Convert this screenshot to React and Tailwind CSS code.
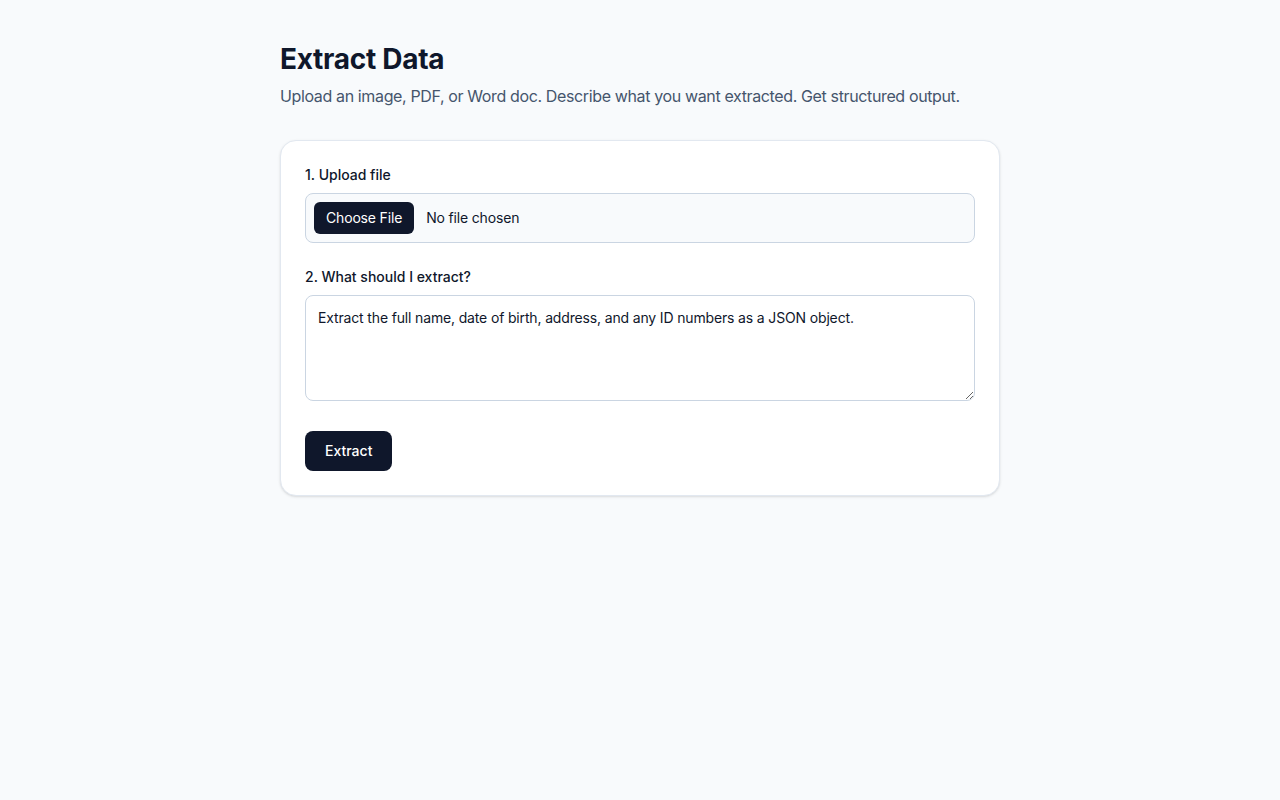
import React, { useState } from 'react';

const App = () => {
  const [prompt, setPrompt] = useState(
    'Extract the full name, date of birth, address, and any ID numbers as a JSON object.'
  );

  return (
    <div className="min-h-screen bg-slate-50 font-['Inter',sans-serif] text-slate-900">
      <div className="mx-auto max-w-[720px] pt-10">
        <h1 className="pt-px text-[28px] leading-9 font-bold tracking-[-0.01em]">Extract Data</h1>
        <p className="mt-[7px] text-base tracking-[-0.023em] text-slate-600">
          Upload an image, PDF, or Word doc. Describe what you want extracted. Get structured output.
        </p>

        <div className="mt-8 rounded-2xl border border-slate-200 bg-white p-6 shadow-sm">
          <label className="block text-sm font-medium">1. Upload file</label>
          <input
            type="file"
            className="mt-2 block w-full rounded-lg border border-slate-300 bg-slate-50 p-2 text-sm tracking-[-0.012em] text-slate-900 file:mr-3 file:rounded-md file:border-0 file:bg-slate-900 file:px-3 file:py-1.5 file:text-sm file:text-white"
          />

          <label className="mt-6 block text-sm font-medium">2. What should I extract?</label>
          <textarea
            rows={4}
            value={prompt}
            onChange={(e) => setPrompt(e.target.value)}
            className="mt-2 block w-full rounded-lg border border-slate-300 bg-white p-3 text-sm tracking-[-0.011em] text-slate-900"
          />

          <button className="mt-[30px] rounded-lg bg-slate-900 px-5 py-2.5 text-sm font-medium text-white">
            Extract
          </button>
        </div>
      </div>
    </div>
  );
};

export default App;
